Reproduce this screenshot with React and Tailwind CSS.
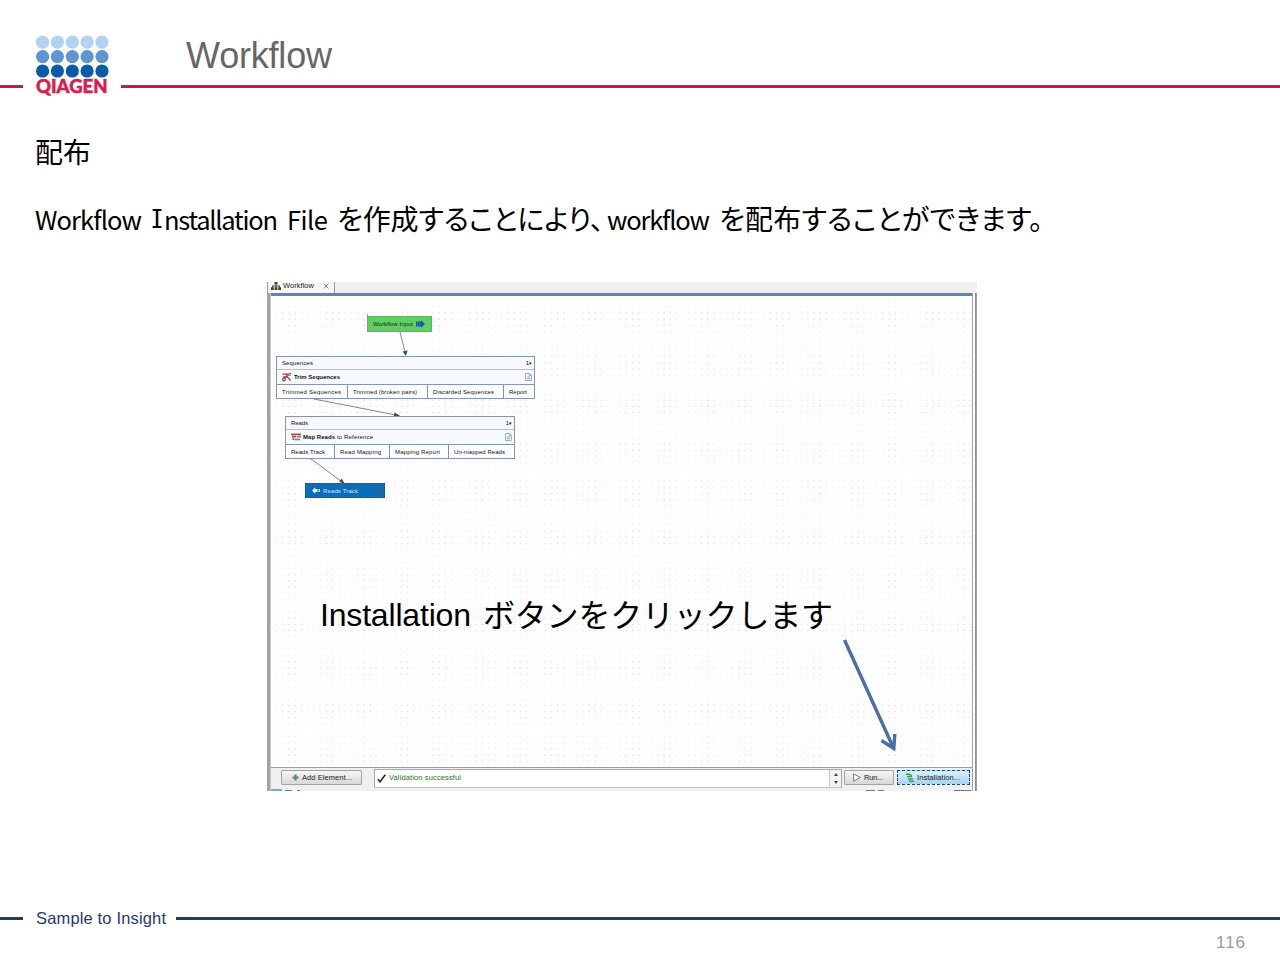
import { useLayoutEffect, useRef } from "react";

const JP = "font-['Noto_Sans_CJK_JP',sans-serif]";

// Spreads a run of text over a given width by adjusting its letter spacing.
function Fit({ w, children, className = "" }) {
  const ref = useRef(null);
  useLayoutEffect(() => {
    const el = ref.current;
    el.style.letterSpacing = "0px";
    const natural = el.getBoundingClientRect().width;
    el.style.letterSpacing = `${(w - natural) / (el.textContent.length - 1)}px`;
  }, [w]);
  return (
    <span className={`inline-block shrink-0 ${className}`} style={{ width: w }}>
      <span ref={ref} className="inline-block whitespace-pre">{children}</span>
    </span>
  );
}

function Logo() {
  const rows = [["#b1d3f0", 42.2], ["#5f95d3", 56.6], ["#0a5cab", 71]];
  return (
    <svg className="mx-[10px] h-[106px] w-[78px] shrink-0" viewBox="33 0 78 106">
      {rows.map(([fill, y]) =>
        [42.6, 57.4, 72.3, 87.1, 102].map((x) => <circle key={x + fill} cx={x} cy={y} r="6.6" fill={fill} />)
      )}
      <text x="36" y="93.200" textLength="71.500" lengthAdjust="spacingAndGlyphs" fontFamily="Lato" fontWeight="900" fontSize="19" fill="#d71f4c" stroke="#d71f4c" strokeWidth=".5">
        QIAGEN
      </text>
    </svg>
  );
}

function Doc({ className = "text-slate-400" }) {
  return (
    <svg className={`h-[8px] w-[7px] shrink-0 ${className}`} viewBox="0 0 7 8" fill="none" stroke="currentColor" strokeWidth=".9">
      <path d="M.6.5h4l1.8 1.8v5.2H.6zM4.4.6v2h2M2 4h3M2 5.7h3" />
    </svg>
  );
}

function Dots() {
  const xs = [0.25, 0.75, 1, 1, 0.75, 0.25];
  const ys = [0.15, 0.5, 0.9, 1, 0.9, 0.5, 0.15];
  return (
    <svg className="absolute inset-0 h-full w-full">
      <defs>
        <pattern id="dots" x="3" y="2" width="37.5" height="43.6" patternUnits="userSpaceOnUse">
          {xs.map((a, i) =>
            ys.map((b, j) => (
              <rect key={`${i}-${j}`} x={2 + i * 6.25} y={2 + j * 6.23} width="1" height="1" fill="#858585" opacity={0.12 + a * b * 0.42} />
            ))
          )}
        </pattern>
      </defs>
      <rect width="100%" height="100%" fill="url(#dots)" />
    </svg>
  );
}

function Cell({ w, tw, children, last }) {
  return (
    <div className={`flex shrink-0 items-center pl-[5px] ${last ? "" : "border-r border-[#7f93b4]"}`} style={{ width: w }}>
      <Fit w={tw}>{children}</Fit>
    </div>
  );
}

function Node({ className, input, inputW, title, icon, cells }) {
  return (
    <div className={`absolute flex flex-col border border-[#8396b8] bg-[#f8f9fe] text-[6px] leading-none text-[#111] ${className}`}>
      <div className="flex h-[13px] items-center justify-between border-b border-[#b5bfd2] pr-[2px] pl-[5px]">
        <Fit w={inputW}>{input}</Fit>
        <span className="text-[6px]">1<span className="text-[5px]">▾</span></span>
      </div>
      <div className="flex h-[15px] items-center border-b border-[#8396b8] pr-[2px] pl-[5px] font-bold">
        {icon}
        {title}
        <Doc className="ml-auto text-slate-400" />
      </div>
      <div className="flex grow overflow-hidden bg-white">{cells}</div>
    </div>
  );
}

function Diagram() {
  return (
    <>
      <svg className="absolute inset-0 h-full w-full" viewBox="271 296 701 471" fill="none" stroke="#5b6b68" strokeWidth=".8">
        <path d="M400 332l5 20M314 399l82 16M311 459l30 22" />
        <path d="M402.6 351.5l5-1-1.6 5.500zM394.500 412.600l5.500 3.200-6.300 1.500zM341.800 478.500l3.200 5.500-6-2.200z" fill="#40514f" stroke="none" />
      </svg>
      <div className="absolute top-[18px] left-[96px] flex h-[18px] w-[65px] flex-col border-l border-[#8396b8]">
        <div className="h-[2px] bg-white" />
        <div className="flex grow items-center border border-l-0 border-[#55b85a] bg-[#63cd65] pb-px pl-[5px] text-[6px] leading-none text-[#0c3012]">
          <Fit w={40}>Workflow Input</Fit>
          <svg className="ml-[3px] h-[8px] w-[9px]" viewBox="0 0 9 8" fill="#155fa8">
            <path d="M0 1.500h1.200v5H0zM1.500 1.500H3v5H1.500zM3.200 1.500h2V.3L9 4 5.200 7.700V6.500h-2z" />
          </svg>
        </div>
      </div>
      <Node
        className="top-[60px] left-[5px] h-[43px] w-[259px]"
        input="Sequences"
        inputW={31}
        icon={
          <svg className="mr-[2px] h-[10px] w-[10px]" viewBox="0 0 10 10" fill="none" stroke="#a5453f" strokeWidth="1.300">
            <path d="M.5 2.500C3 .5 4 4 9 1.200M5.500 3L2.500 6M5 4.500l3.500 4M1 5h4" />
            <circle cx="2" cy="7.500" r="1.300" />
            <path d="M6 3.500l3-.5" stroke="#555" strokeWidth=".8" />
          </svg>
        }
        title={<Fit w={46}>Trim Sequences</Fit>}
        cells={
          <>
            <Cell w={71} tw={59}>Trimmed Sequences</Cell>
            <Cell w={80} tw={64}>Trimmed (broken pairs)</Cell>
            <Cell w={76} tw={61}>Discarded Sequences</Cell>
            <Cell w={30} tw={18} last>Report</Cell>
          </>
        }
      />
      <Node
        className="top-[120px] left-[14px] h-[43px] w-[230px]"
        input="Reads"
        inputW={17}
        icon={
          <svg className="mr-[2px] h-[8px] w-[10px]" viewBox="0 0 10 8" fill="none" strokeWidth="1.700">
            <path d="M0 1.400h10M1 3.700h4" stroke="#a5574a" />
            <path d="M6 3.700h4M4 6.500h5" stroke="#b8744c" />
            <path d="M1.500 5.500l2 1" stroke="#666" />
          </svg>
        }
        title={
          <>
            <Fit w={32}>Map Reads</Fit>
            <Fit w={36} className="ml-[2px] font-normal">to Reference</Fit>
          </>
        }
        cells={
          <>
            <Cell w={49} tw={34}>Reads Track</Cell>
            <Cell w={55} tw={41}>Read Mapping</Cell>
            <Cell w={59} tw={45}>Mapping Report</Cell>
            <Cell w={65} tw={51} last>Un-mapped Reads</Cell>
          </>
        }
      />
      <div className="absolute top-[187px] left-[34px] flex h-[15px] w-[80px] items-center border border-[#0b609f] bg-[#0a6db7] pr-[2px] pl-[6px] text-[6px] leading-none text-[#d3eafa]">
        <svg className="mr-[3px] h-[7px] w-[8px]" viewBox="0 0 8 7" fill="#e5f3ff">
          <path d="M0 3.500L3.300.2V2h2v3h-2v1.800zM5.800 2h.7v3h-.7zM7 2h.8v3H7z" />
        </svg>
        <Fit w={35}>Reads Track</Fit>
        <Doc className="ml-auto text-[#31649a]" />
      </div>
    </>
  );
}

function Note() {
  return (
    <>
      <div className="absolute top-[295px] left-[49px] flex h-[48px] items-start text-[32px] leading-[48px] text-black">
        <Fit w={151}>Installation</Fit>
        <Fit w={350} className={`mt-[-2px] ml-[12px] ${JP}`}>ボタンをクリックします</Fit>
      </div>
      <svg className="absolute top-[338px] left-[565px] h-[124px] w-[70px]" viewBox="836 634 70 124" fill="none" stroke="#4b6fa5" strokeWidth="3.400">
        <path d="M844.500 640L893.500 748M881.500 740.500L893.800 748.500L894.800 734" />
      </svg>
    </>
  );
}

function WorkflowWindow() {
  return (
    <div className="ml-[267px] flex h-[509px] w-[710px] flex-col overflow-hidden bg-[#f0f0f0] text-[#222]">
      <div className="flex h-[11px] shrink-0">
        <div className="flex w-[68px] items-center border-r border-l border-[#999] bg-[#f6f6f6] pb-[3px] pl-[3px] text-[7.500px] leading-none">
          <svg className="mr-[2px] h-[8px] w-[10px]" viewBox="0 0 10 8" fill="#334b2a">
            <path d="M3.500 0h3v2.600h-3zM0 5.200h2.800V8H0zM3.600 5.200h2.800V8H3.600zM7.200 5.200H10V8H7.200zM4.600 2h.8v3.500h-.8zM1 3.600h8v.8H1zM1 3.600h.8v2H1zM8.200 3.600H9v2h-.8z" />
          </svg>
          <Fit w={31}>Workflow</Fit>
          <svg className="ml-[9px] h-[6px] w-[6px]" viewBox="0 0 6 6" stroke="#777" strokeWidth=".9">
            <path d="M.5.5l5 5M5.500.5l-5 5" />
          </svg>
        </div>
      </div>
      <div className="flex grow border-l-[3px] border-[#a3a3a3]">
        <div className="flex grow flex-col border-l border-[#c9c9c9]">
          <div className="h-[3px] shrink-0 bg-[#5488c4]" />
          <div className="relative h-[471px] w-[701px] shrink-0 bg-white">
            <Dots />
            <Diagram />
            <Note />
          </div>
          <div className="flex h-[22px] shrink-0 items-start border-t border-[#9c9c9c] text-[7.500px] leading-none">
            <div className="mt-[2px] ml-[10px] flex h-[15px] w-[81px] items-center rounded-[1px] border border-[#a2a2a2] bg-linear-to-b from-[#f6f6f6] to-[#d8d8d8] pl-[10px]">
              <svg className="mr-[3px] h-[7px] w-[7px]" viewBox="0 0 7 7" stroke="#5a8a5c" strokeWidth="2.200">
                <path d="M3.500.5v6M.5 3.500h6" />
              </svg>
              <Fit w={50}>Add Element...</Fit>
            </div>
            <div className="mt-px ml-[12px] flex h-[19px] w-[468px] border border-[#a9a9a9] border-b-[#c4c4c4] bg-white">
              <div className="flex h-[16px] grow items-center pl-[2px] text-[#267426]">
                <svg className="mr-[3px] h-[9px] w-[9px]" viewBox="0 0 9 9" fill="none" stroke="#23236f" strokeWidth="1.600">
                  <path d="M.8 5.200L3 7.800L8.300.8" />
                </svg>
                <Fit w={72}>Validation successful</Fit>
              </div>
              <div className="flex w-[12px] flex-col items-center justify-between border-l border-[#c9c9c9] bg-[#f3f3f3] py-[3px]">
                <svg className="h-[3px] w-[4px]" viewBox="0 0 4 3" fill="#444"><path d="M2 0l2 3H0z" /></svg>
                <svg className="h-[3px] w-[4px]" viewBox="0 0 4 3" fill="#444"><path d="M2 3L0 0h4z" /></svg>
              </div>
            </div>
            <div className="mt-[2px] ml-[2px] flex h-[15px] w-[50px] items-center rounded-[1px] border border-[#a2a2a2] bg-linear-to-b from-[#f6f6f6] to-[#d8d8d8] pl-[8px]">
              <svg className="mr-[3px] h-[9px] w-[8px]" viewBox="0 0 8 9" fill="#fff" stroke="#555" strokeWidth=".8"><path d="M.6.8L7.200 4.500L.6 8.200z" /></svg>
              <Fit w={19}>Run...</Fit>
            </div>
            <div className="mt-[2px] ml-[3px] flex h-[15px] w-[73px] items-center border border-dashed border-[#1f4a73] bg-linear-to-b from-[#dcf0fb] to-[#a3d4ef] pl-[8px]">
              <svg className="mr-[3px] h-[9px] w-[8px]" viewBox="0 0 8 9" fill="none" stroke="#3c9b51" strokeWidth="1.400"><path d="M0 1.200h4M1 3.500h5M2 6h5M3 8.300h5M5 1v2" /></svg>
              <Fit w={43}>Installation...</Fit>
            </div>
          </div>
          <div className="flex h-[2px] items-end">
            <div className="h-[2px] w-[11px] bg-[#79a5cf]" />
            <div className="ml-[3px] h-[1px] w-[7px] bg-[#5683ad]" />
            <div className="ml-[5px] h-[1px] w-[3px] bg-[#75879a]" />
            <div className="ml-[566px] h-[1px] w-[9px] bg-[#777]" />
            <div className="ml-[3px] h-[1px] w-[6px] bg-[#777]" />
            <div className="ml-[70px] h-[1px] w-[17px] bg-[#777]" />
          </div>
        </div>
        <div className="-ml-[5px] flex w-[5px] shrink-0 border-r border-l border-[#a0a0a0] bg-white">
          <div className="ml-auto w-px bg-[#8f8f8f]" />
        </div>
      </div>
    </div>
  );
}

export default function App() {
  return (
    <div className="flex h-[960px] w-[1280px] flex-col overflow-hidden bg-white font-['Liberation_Sans',sans-serif]">
      <header className="flex h-[108px] shrink-0 items-start">
        <div className="mt-[85px] h-[3px] w-[23px] shrink-0 bg-[#c71a47]" />
        <Logo />
        <div className="flex grow flex-col">
          <h1 className="h-[85px] pt-[34px] pl-[65px] text-[36px] leading-[44px] text-[#666]">
            <Fit w={146}>Workflow</Fit>
          </h1>
          <div className="h-[3px] bg-[#c71a47]" />
        </div>
      </header>
      <main className="flex h-[792px] shrink-0 flex-col">
        <p className={`ml-[35px] pt-[23px] text-[28px] leading-[40px] text-black ${JP}`}>配布</p>
        <p className={`mt-[27px] mb-[44px] ml-[35px] flex h-[40px] items-start text-[25.500px] leading-[40px] text-black ${JP}`}>
          <Fit w={107} className="mt-px">Workflow</Fit>
          <span className="mt-px ml-[8px] flex">
            <span className="w-[14px] text-center font-['Inter',sans-serif] text-[25px] [font-feature-settings:'cv08']">I</span>
            <Fit w={114}>nstallation</Fit>
          </span>
          <Fit w={41} className="mt-px ml-[9px]">File</Fit>
          <Fit w={267} className="ml-[9px] text-[28px] [font-feature-settings:'palt']">を作成することにより、</Fit>
          <Fit w={103} className="mt-px ml-[3px]">workflow</Fit>
          <Fit w={324} className="ml-[9px] text-[28px] [font-feature-settings:'palt']">を配布することができます。</Fit>
        </p>
        <WorkflowWindow />
      </main>
      <footer className="flex flex-col">
        <div className="flex h-[36px] items-center text-[16.500px] leading-none text-[#25396f]">
          <div className="h-[3px] w-[23px] bg-[#25396f]" />
          <Fit w={130} className="ml-[13px]">Sample to Insight</Fit>
          <div className="ml-[10px] h-[3px] grow bg-[#25396f]" />
        </div>
        <div className="mt-[-2px] flex justify-end pr-[35px] text-[17px] leading-[18px] text-[#999]">
          <Fit w={29}>116</Fit>
        </div>
      </footer>
    </div>
  );
}
